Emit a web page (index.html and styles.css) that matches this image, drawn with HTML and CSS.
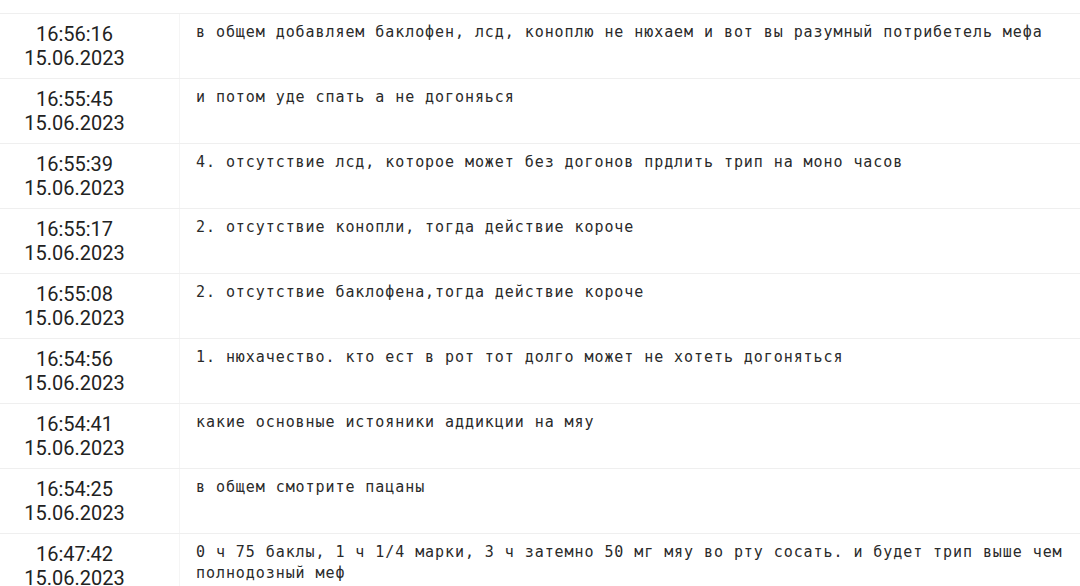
FILE: index.html
```html
<!DOCTYPE html>
<html lang="ru">
<head>
    <meta charset="UTF-8">
    <meta name="viewport" content="width=device-width, initial-scale=1.0">
    <title>Сообщения</title>
    <link rel="stylesheet" href="styles.css">
</head>
<body>
    <div class="log">
        <div class="row">
            <div class="when">16:56:16<br>15.06.2023</div>
            <div class="msg">в общем добавляем баклофен, лсд, коноплю не нюхаем и вот вы разумный потрибетель мефа</div>
        </div>
        <div class="row">
            <div class="when">16:55:45<br>15.06.2023</div>
            <div class="msg">и потом уде спать а не догоняься</div>
        </div>
        <div class="row">
            <div class="when">16:55:39<br>15.06.2023</div>
            <div class="msg">4. отсутствие лсд, которое может без догонов прдлить трип на моно часов</div>
        </div>
        <div class="row">
            <div class="when">16:55:17<br>15.06.2023</div>
            <div class="msg">2. отсутствие конопли, тогда действие короче</div>
        </div>
        <div class="row">
            <div class="when">16:55:08<br>15.06.2023</div>
            <div class="msg">2. отсутствие баклофена,тогда действие короче</div>
        </div>
        <div class="row">
            <div class="when">16:54:56<br>15.06.2023</div>
            <div class="msg">1. нюхачество. кто ест в рот тот долго может не хотеть догоняться</div>
        </div>
        <div class="row">
            <div class="when">16:54:41<br>15.06.2023</div>
            <div class="msg">какие основные истояники аддикции на мяу</div>
        </div>
        <div class="row">
            <div class="when">16:54:25<br>15.06.2023</div>
            <div class="msg">в общем смотрите пацаны</div>
        </div>
        <div class="row">
            <div class="when">16:47:42<br>15.06.2023</div>
            <div class="msg">0 ч 75 баклы, 1 ч 1/4 марки, 3 ч затемно 50 мг мяу во рту сосать. и будет трип выше чем полнодозный меф</div>
        </div>
    </div>
</body>
</html>
```

FILE: styles.css
```css
body {
    margin: 0;
    background-color: #fff;
    color: #222;
    overflow: hidden;
}

.log {
    padding-top: 13px;
}

.row {
    display: grid;
    grid-template-columns: 180px 1fr;
    border-top: 1px solid #efefef;
}

.when {
    font-family: Roboto, sans-serif;
    font-size: 20px;
    line-height: 24px;
    text-align: center;
    padding: 8px 30px 8px 0;
    border-right: 1px solid #f5f5f5;
}

.msg {
    font-family: "DejaVu Sans Mono", monospace;
    font-size: 15px;
    line-height: 21px;
    letter-spacing: 0.93px;
    color: #2a2a2a;
    padding: 8px 10px 0 16px;
}
```
